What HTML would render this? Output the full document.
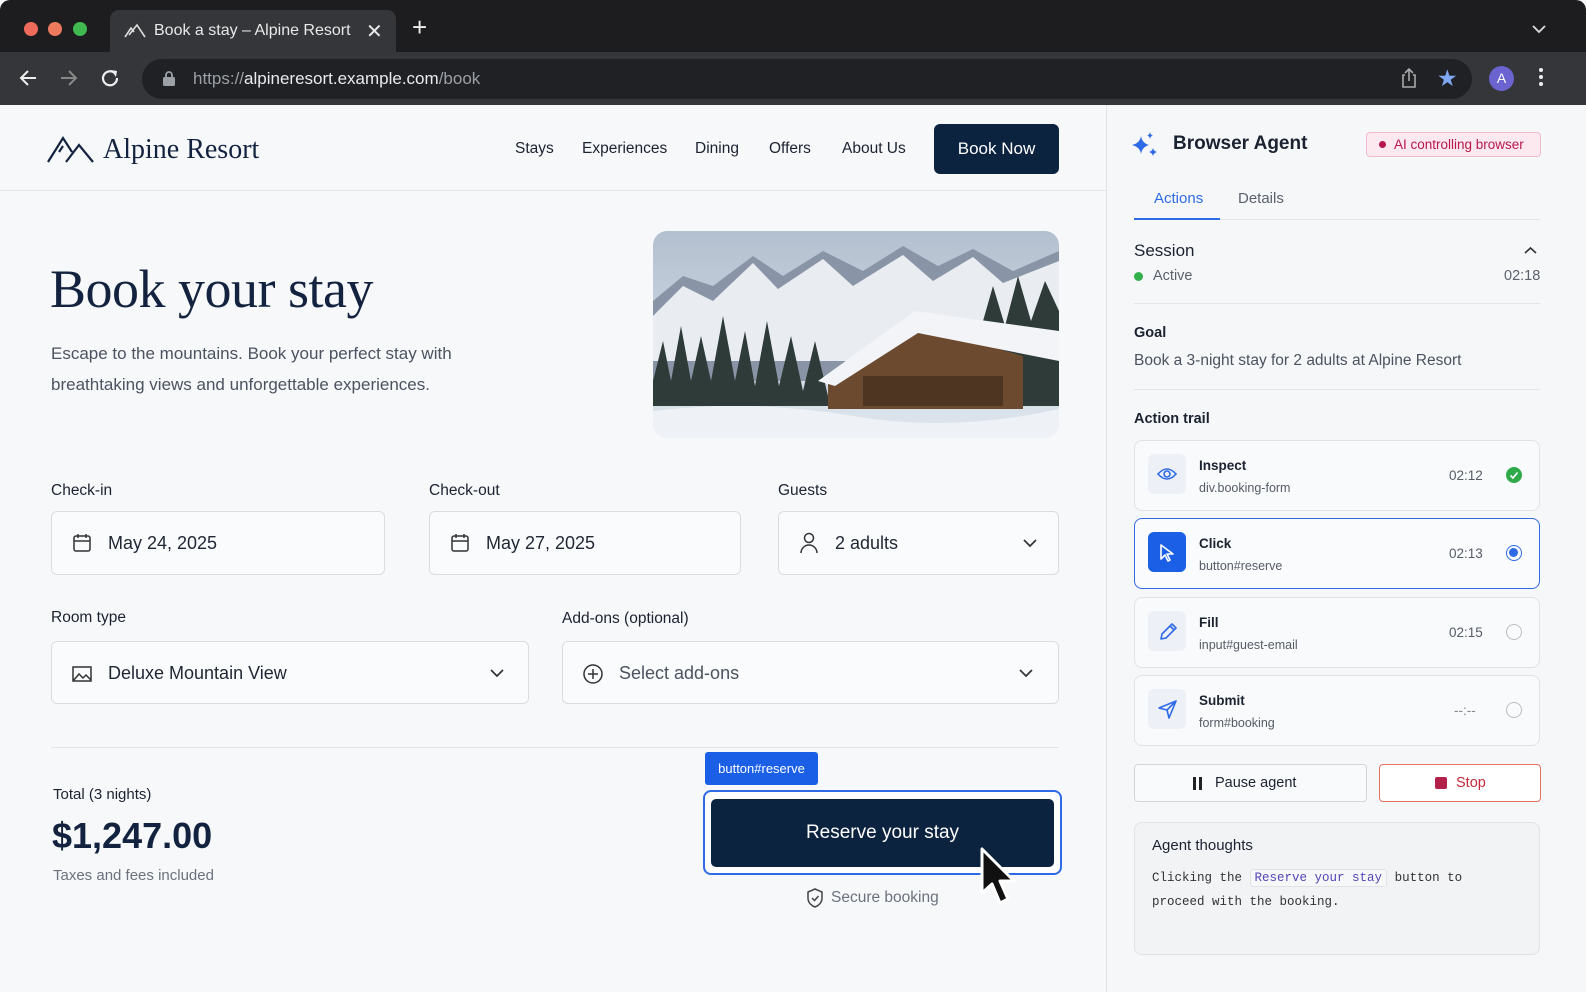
<!DOCTYPE html>
<html><head><meta charset="utf-8"><style>
*{box-sizing:border-box;margin:0;padding:0}
body{width:1586px;height:992px;overflow:hidden;background:#f6f7f9;font-family:"Liberation Sans",sans-serif;position:relative}
.win{position:absolute;left:0;top:0;width:1586px;height:992px;border-radius:10px 10px 0 0;overflow:hidden;background:#f7f8fa}
.tabbar{position:absolute;left:0;top:0;width:100%;height:52px;background:#1d1d1f}
.toolbar{position:absolute;left:0;top:52px;width:100%;height:53px;background:#35363a}
.dot{position:absolute;top:22px;width:14px;height:14px;border-radius:50%}
.tab{position:absolute;left:110px;top:10px;width:286px;height:42px;background:#35363a;border-radius:9px 9px 0 0;color:#e8e8e8;font-size:16px}
.addr{position:absolute;left:142px;top:59px;width:1330px;height:40px;border-radius:20px;background:#202124;color:#e8eaed;font-size:17px}
.abs{position:absolute}
.nav a{position:absolute;top:140px;font-size:15.5px;color:#1b2230}
.lbl{position:absolute;font-size:15.5px;color:#1b2230}
.field{position:absolute;height:64px;border:1px solid #d9dce1;border-radius:6px;background:#fafbfc;font-size:18px;color:#1f2633}
.field span{position:absolute;left:56px;top:21px}
.side{position:absolute;left:1106px;top:105px;width:480px;height:887px;border-left:1px solid #e1e3e7;background:#f6f7f9}
.card{position:absolute;left:1134px;width:406px;height:71px;border:1px solid #e0e2e6;border-radius:8px;background:#f9fafb}
.card .ic{position:absolute;left:13px;top:13px;width:38px;height:40px;border-radius:6px;background:#edf0f6}
.card .t{position:absolute;left:64px;top:17px;font-size:13.5px;color:#1b2230;font-weight:bold}
.card .s{position:absolute;left:64px;top:40px;font-size:12.5px;color:#555c66}
.card .tm{position:absolute;left:314px;top:27px;font-size:13.5px;color:#555c66}
.card .r{position:absolute;left:371px;top:26px;width:16px;height:16px;border-radius:50%;border:1.5px solid #b9bdc4}
</style></head><body>
<div class="win">
<div class="tabbar">
 <div class="dot" style="left:24px;background:#ee6a5a"></div>
 <div class="dot" style="left:48px;background:#ee7a5e"></div>
 <div class="dot" style="left:73px;background:#3fb950"></div>
 <div class="tab">
  <svg class="abs" style="left:14px;top:13px" width="22" height="16" viewBox="0 0 22 16"><path d="M1 14 L7 5 L10 9 M5 12 L13 2 L21 14" fill="none" stroke="#ddd" stroke-width="1.6"/></svg>
  <span class="abs" style="left:44px;top:12px">Book a stay – Alpine Resort</span>
  <span class="abs" style="left:256px;top:9px;font-size:20px">✕</span>
 </div>
 <span class="abs" style="left:412px;top:14px;color:#eee;font-size:26px;line-height:26px">+</span>
 <svg class="abs" style="left:1532px;top:24px" width="14" height="10"><path d="M1 2 L7 8 L13 2" fill="none" stroke="#ddd" stroke-width="1.8"/></svg>
</div>
<div class="toolbar">
 <svg class="abs" style="left:18px;top:17px" width="20" height="18"><path d="M18 9 H3 M10 2 L3 9 L10 16" fill="none" stroke="#eee" stroke-width="2"/></svg>
 <svg class="abs" style="left:59px;top:17px" width="20" height="18"><path d="M2 9 H17 M10 2 L17 9 L10 16" fill="none" stroke="#888" stroke-width="2"/></svg>
 <svg class="abs" style="left:100px;top:16px" width="22" height="20"><path d="M17 10 A7 7 0 1 1 14 4.5" fill="none" stroke="#eee" stroke-width="2.2"/><path d="M11 2 L17 3 L16 9Z" fill="#eee"/></svg>
</div>
<div class="addr">
 <svg class="abs" style="left:20px;top:11px" width="14" height="17"><rect x="1" y="7" width="12" height="9" rx="1.5" fill="#9aa0a6"/><path d="M4 7 V5 A3 3 0 0 1 10 5 V7" fill="none" stroke="#9aa0a6" stroke-width="1.8"/></svg>
 <span class="abs" style="left:51px;top:10px"><span style="color:#9aa0a6">https://</span>alpineresort.example.com<span style="color:#9aa0a6">/book</span></span>
 <svg class="abs" style="left:1258px;top:8px" width="18" height="22"><path d="M5 8 H3 V20 H15 V8 H13 M9 14 V2 M5 6 L9 2 L13 6" fill="none" stroke="#aaa" stroke-width="1.6"/></svg>
 <span class="abs" style="left:1295px;top:6px;color:#7ea8f5;font-size:23px">★</span>
</div>
<div class="abs" style="left:1489px;top:66px;width:25px;height:25px;border-radius:50%;background:#6b63d0;color:#fff;font-size:14px;text-align:center;line-height:25px">A</div>
<div class="abs" style="left:1539px;top:68px;width:5px;color:#eee">
 <div style="width:4px;height:4px;background:#eee;border-radius:50%;margin-bottom:3px"></div><div style="width:4px;height:4px;background:#eee;border-radius:50%;margin-bottom:3px"></div><div style="width:4px;height:4px;background:#eee;border-radius:50%"></div></div>

<!-- header -->
<div class="abs" style="left:0;top:190px;width:1106px;height:1px;background:#e3e5e8"></div>
<svg class="abs" style="left:46px;top:135px" width="48" height="30" viewBox="0 0 48 30"><path d="M2 27 L17 3 L26 17 M13 17 L17 11 M20 27 L33 10 L47 27" fill="none" stroke="#13233f" stroke-width="2.2"/></svg>
<div class="abs" style="left:103px;top:134px;font-family:'Liberation Serif',serif;font-size:28px;color:#13233f">Alpine Resort</div>
<div class="nav"><a style="left:515px">Stays</a><a style="left:582px">Experiences</a><a style="left:695px">Dining</a><a style="left:769px">Offers</a><a style="left:842px">About Us</a></div>
<div class="abs" style="left:934px;top:124px;width:125px;height:50px;background:#0c2340;border-radius:6px;color:#fff;font-size:17px;text-align:center;line-height:50px">Book Now</div>

<div class="abs" style="left:50px;top:258px;font-family:'Liberation Serif',serif;font-size:54px;color:#13233f;letter-spacing:-0.5px">Book your stay</div>
<div class="abs" style="left:51px;top:338px;font-size:17px;line-height:31px;color:#4b5360">Escape to the mountains. Book your perfect stay with<br>breathtaking views and unforgettable experiences.</div>

<svg class="abs" style="left:653px;top:231px;border-radius:14px" width="406" height="207" viewBox="0 0 406 207">
 <defs><linearGradient id="sk" x1="0" y1="0" x2="0" y2="1"><stop offset="0" stop-color="#b3c0cf"/><stop offset="1" stop-color="#dfe6ee"/></linearGradient></defs>
 <rect width="406" height="207" fill="url(#sk)"/>
 <path d="M0 70 L30 45 L60 55 L100 25 L130 45 L170 20 L210 40 L250 15 L285 35 L320 18 L360 40 L406 20 V150 H0Z" fill="#8995a6"/>
 <path d="M0 85 L30 55 L60 70 L100 32 L125 58 L170 28 L200 55 L250 24 L280 50 L320 26 L350 52 L406 30 V130 H0Z" fill="#e9edf2"/>
 <path d="M0 150 L10 110 L18 150 L28 95 L38 150 L48 105 L58 150 L70 85 L82 150 L92 100 L102 155 L114 90 L126 155 L138 105 L150 160 L162 110 L175 165 L200 140 L330 90 L340 55 L352 95 L365 45 L378 90 L392 50 L406 80 V175 H0Z" fill="#2e3b38"/>
 <path d="M175 145 L265 95 L370 125 V178 H175Z" fill="#6b4a30"/>
 <path d="M165 150 L262 80 L406 100 V130 L265 102 L182 155Z" fill="#f2f4f7"/>
 <rect x="210" y="145" width="140" height="30" fill="#4e3522"/>
 <path d="M0 180 Q100 168 200 185 T406 178 V207 H0Z" fill="#eef2f6"/>
</svg>

<div class="lbl" style="left:51px;top:482px">Check-in</div>
<div class="lbl" style="left:429px;top:482px">Check-out</div>
<div class="lbl" style="left:778px;top:482px">Guests</div>
<div class="field" style="left:51px;top:511px;width:334px"><svg class="abs" style="left:20px;top:21px" width="20" height="20"><rect x="2" y="3" width="16" height="15" rx="2" fill="none" stroke="#333" stroke-width="1.5"/><path d="M2 8 H18 M6 1 V5 M14 1 V5" stroke="#333" stroke-width="1.5"/></svg><span>May 24, 2025</span></div>
<div class="field" style="left:429px;top:511px;width:312px"><svg class="abs" style="left:20px;top:21px" width="20" height="20"><rect x="2" y="3" width="16" height="15" rx="2" fill="none" stroke="#333" stroke-width="1.5"/><path d="M2 8 H18 M6 1 V5 M14 1 V5" stroke="#333" stroke-width="1.5"/></svg><span>May 27, 2025</span></div>
<div class="field" style="left:778px;top:511px;width:281px"><svg class="abs" style="left:20px;top:20px" width="20" height="22"><circle cx="10" cy="6" r="4.5" fill="none" stroke="#333" stroke-width="1.5"/><path d="M2 21 A8 8 0 0 1 18 21" fill="none" stroke="#333" stroke-width="1.5"/></svg><span>2 adults</span><svg class="abs" style="left:244px;top:27px" width="14" height="9"><path d="M1 1 L7 7 L13 1" fill="none" stroke="#333" stroke-width="1.7"/></svg></div>

<div class="lbl" style="left:51px;top:609px">Room type</div>
<div class="lbl" style="left:562px;top:610px">Add-ons (optional)</div>
<div class="field" style="left:51px;top:641px;width:478px;height:63px"><svg class="abs" style="left:19px;top:21px" width="22" height="20"><path d="M2 4 V18 H20 V4 Z M2 18 L8 11 L12 15 L15 12 L20 17" fill="none" stroke="#333" stroke-width="1.5"/></svg><span>Deluxe Mountain View</span><svg class="abs" style="left:438px;top:27px" width="14" height="9"><path d="M1 1 L7 7 L13 1" fill="none" stroke="#333" stroke-width="1.7"/></svg></div>
<div class="field" style="left:562px;top:641px;width:497px;height:63px"><svg class="abs" style="left:19px;top:21px" width="22" height="22"><circle cx="11" cy="11" r="9" fill="none" stroke="#333" stroke-width="1.5"/><path d="M11 6 V16 M6 11 H16" stroke="#333" stroke-width="1.5"/></svg><span style="color:#4b5360">Select add-ons</span><svg class="abs" style="left:456px;top:27px" width="14" height="9"><path d="M1 1 L7 7 L13 1" fill="none" stroke="#333" stroke-width="1.7"/></svg></div>

<div class="abs" style="left:51px;top:747px;width:1008px;height:1px;background:#e3e5e8"></div>
<div class="lbl" style="left:53px;top:786px;font-size:15px">Total (3 nights)</div>
<div class="abs" style="left:52px;top:815px;font-size:36px;font-weight:bold;color:#13233f">$1,247.00</div>
<div class="abs" style="left:53px;top:867px;font-size:15px;color:#6b727d">Taxes and fees included</div>

<div class="abs" style="left:705px;top:752px;width:113px;height:33px;background:#1a5fe6;border-radius:3px;color:#fff;font-size:13px;text-align:center;line-height:33px">button#reserve</div>
<div class="abs" style="left:703px;top:790px;width:359px;height:85px;border:2px solid #2f6ae6;border-radius:8px;background:#fff"></div>
<div class="abs" style="left:711px;top:799px;width:343px;height:68px;background:#0c2340;border-radius:5px;color:#fff;font-size:19px;text-align:center;line-height:68px">Reserve your stay</div>
<svg class="abs" style="left:978px;top:846px" width="44" height="64" viewBox="0 0 44 64"><path d="M4 3 L4 47 L14 38 L22 57 L30 53 L22 35 L36 35 Z" fill="#111" stroke="#fff" stroke-width="3" stroke-linejoin="round"/></svg>
<svg class="abs" style="left:806px;top:888px" width="18" height="20"><path d="M9 1 L16 4 V10 C16 15 12 18 9 19 C6 18 2 15 2 10 V4 Z" fill="none" stroke="#444" stroke-width="1.5"/><path d="M6 10 L8.5 12.5 L12.5 8" fill="none" stroke="#444" stroke-width="1.5"/></svg>
<div class="abs" style="left:831px;top:889px;font-size:15.5px;color:#6b727d">Secure booking</div>

<!-- sidebar -->
<div class="side"></div>
<svg class="abs" style="left:1131px;top:131px" width="30" height="28" viewBox="0 0 30 28"><path d="M10 5 Q11 12 18 14 Q11 16 10 23 Q9 16 1 14 Q9 12 10 5Z" fill="#2f6ae6"/><path d="M19 1 Q19.5 4 22 4.5 Q19.5 5 19 8 Q18.5 5 16 4.5 Q18.5 4 19 1Z" fill="#2f6ae6"/><path d="M22 17 Q22.6 20 26 21 Q22.6 22 22 25 Q21.4 22 18 21 Q21.4 20 22 17Z" fill="#2f6ae6"/></svg>
<div class="abs" style="left:1173px;top:133px;font-size:19px;font-weight:bold;color:#1b2230">Browser Agent</div>
<div class="abs" style="left:1366px;top:132px;width:175px;height:25px;border:1px solid #f0bccb;background:#fbe9ef;border-radius:4px;color:#b8174a;font-size:13.5px;line-height:23px"><span style="display:inline-block;width:7px;height:7px;border-radius:50%;background:#b8174a;margin:0 8px 1px 12px"></span>AI controlling browser</div>
<div class="abs" style="left:1154px;top:190px;font-size:15px;color:#2f6ae6">Actions</div>
<div class="abs" style="left:1238px;top:190px;font-size:15px;color:#5b626d">Details</div>
<div class="abs" style="left:1134px;top:219px;width:406px;height:1px;background:#e3e5e8"></div>
<div class="abs" style="left:1134px;top:218px;width:86px;height:2px;background:#2f6ae6"></div>
<div class="abs" style="left:1134px;top:241px;font-size:17px;color:#1b2230">Session</div>
<svg class="abs" style="left:1524px;top:246px" width="13" height="9"><path d="M1 7 L6.5 2 L12 7" fill="none" stroke="#333" stroke-width="1.6"/></svg>
<div class="abs" style="left:1134px;top:272px;width:9px;height:9px;border-radius:50%;background:#34b04a"></div>
<div class="abs" style="left:1153px;top:268px;font-size:14.5px;color:#5b626d">Active</div>
<div class="abs" style="left:1504px;top:268px;font-size:14.5px;color:#5b626d">02:18</div>
<div class="abs" style="left:1134px;top:303px;width:406px;height:1px;background:#e3e5e8"></div>
<div class="abs" style="left:1134px;top:325px;font-size:14.5px;color:#1b2230;font-weight:bold">Goal</div>
<div class="abs" style="left:1134px;top:352px;font-size:15.5px;color:#4b5360">Book a 3-night stay for 2 adults at Alpine Resort</div>
<div class="abs" style="left:1134px;top:389px;width:406px;height:1px;background:#e3e5e8"></div>
<div class="abs" style="left:1134px;top:411px;font-size:14.5px;color:#1b2230;font-weight:bold">Action trail</div>

<div class="card" style="top:440px"><div class="ic"><svg class="abs" style="left:9px;top:12px" width="20" height="16"><path d="M1 8 Q10 -2 19 8 Q10 18 1 8Z" fill="none" stroke="#2f6ae6" stroke-width="1.6"/><circle cx="10" cy="8" r="3" fill="none" stroke="#2f6ae6" stroke-width="1.6"/></svg></div><div class="t">Inspect</div><div class="s">div.booking-form</div><div class="tm">02:12</div><div class="r" style="border:none;background:#2faa4a"><svg width="16" height="16"><path d="M4.5 8.5 L7 11 L11.5 5.5" fill="none" stroke="#fff" stroke-width="1.6"/></svg></div></div>
<div class="card" style="top:518px;border:1.5px solid #2f6ae6;background:#fafbfd"><div class="ic" style="background:#1a5fe6"><svg class="abs" style="left:11px;top:11px" width="18" height="20"><path d="M2 2 L2 16 L6 12 L9 18 L11 17 L8 11 L14 11 Z" fill="none" stroke="#fff" stroke-width="1.6" stroke-linejoin="round"/></svg></div><div class="t">Click</div><div class="s">button#reserve</div><div class="tm">02:13</div><div class="r" style="border:1.5px solid #2f6ae6"><div style="width:9px;height:9px;margin:2px;border-radius:50%;background:#2f6ae6"></div></div></div>
<div class="card" style="top:597px"><div class="ic"><svg class="abs" style="left:9px;top:10px" width="22" height="22"><path d="M4 18 L5 13 L15 3 L19 7 L9 17 Z M13 5 L17 9" fill="none" stroke="#2f6ae6" stroke-width="1.6" stroke-linejoin="round"/></svg></div><div class="t">Fill</div><div class="s">input#guest-email</div><div class="tm">02:15</div><div class="r"></div></div>
<div class="card" style="top:675px"><div class="ic"><svg class="abs" style="left:9px;top:10px" width="22" height="22"><path d="M2 9 L19 2 L12 19 L10 11 Z M10 11 L19 2" fill="none" stroke="#2f6ae6" stroke-width="1.6" stroke-linejoin="round"/></svg></div><div class="t">Submit</div><div class="s">form#booking</div><div class="tm" style="left:319px;color:#888">--:--</div><div class="r"></div></div>

<div class="abs" style="left:1134px;top:764px;width:233px;height:38px;border:1px solid #d3d6db;border-radius:4px;background:#f9fafb;font-size:14.5px;color:#1b2230;line-height:36px"><span style="position:absolute;left:58px;top:12px;width:3px;height:13px;background:#222"></span><span style="position:absolute;left:64px;top:12px;width:3px;height:13px;background:#222"></span><span style="position:absolute;left:80px">Pause agent</span></div>
<div class="abs" style="left:1379px;top:764px;width:162px;height:38px;border:1px solid #e8705e;border-radius:4px;background:#fff;font-size:14.5px;color:#c42a3a;line-height:36px"><span style="position:absolute;left:55px;top:12px;width:12px;height:12px;background:#b3204a;border-radius:2px"></span><span style="position:absolute;left:76px">Stop</span></div>

<div class="abs" style="left:1134px;top:822px;width:406px;height:133px;border:1px solid #e0e2e6;border-radius:8px;background:#f2f3f5"></div>
<div class="abs" style="left:1152px;top:837px;font-size:15px;color:#1b2230">Agent thoughts</div>
<div class="abs" style="left:1152px;top:866px;font-family:'Liberation Mono',monospace;font-size:12.5px;line-height:24px;color:#333">Clicking the <span style="background:#f6f7f9;border:1px solid #e0e2e6;border-radius:3px;padding:1px 4px;color:#5446b8">Reserve your stay</span> button to<br>proceed with the booking.</div>
</div>
</body></html>
